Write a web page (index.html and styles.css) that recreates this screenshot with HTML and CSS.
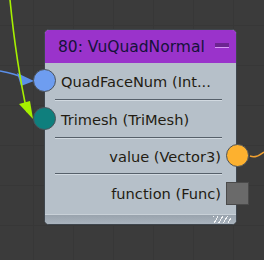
FILE: index.html
```html
<html>
<head>
<link rel="stylesheet" href="styles.css">
</head>
<body>
<div class="canvas">
    <svg class="wires" width="264" height="260" viewBox="0 0 264 260">
        <path d="M0 71 C 12 73, 20 76, 26 79" stroke="#5b8fe8" stroke-width="1.5" fill="none"/>
        <polygon points="34,81 17,73 21,86" fill="#5b8fe8"/>
        <path d="M10 0 C 14 40, 20 80, 27 112" stroke="#a6f000" stroke-width="1.6" fill="none"/>
        <polygon points="33,119 19,104 30,101" fill="#a6f000"/>
        <path d="M250 156 C 255 158, 258 156, 264 152" stroke="#f0a030" stroke-width="1.5" fill="none"/>
    </svg>

    <div class="node">
        <div class="node-head">
            <span class="node-title">80: VuQuadNormal</span>
            <span class="node-min"></span>
        </div>
        <div class="row row-in">
            <span class="port port-blue"></span>
            <span class="label">QuadFaceNum (Int...</span>
        </div>
        <div class="sep"></div>
        <div class="row row-in">
            <span class="port port-teal"></span>
            <span class="label">Trimesh (TriMesh)</span>
        </div>
        <div class="sep"></div>
        <div class="row row-out row-short">
            <span class="label">value (Vector3)</span>
            <span class="port port-orange"></span>
        </div>
        <div class="sep"></div>
        <div class="row row-out row-tall">
            <span class="label">function (Func)</span>
            <span class="port port-func"></span>
        </div>
        <div class="node-foot">
            <span class="grip"></span>
        </div>
    </div>
</div>
</body>
</html>
```

FILE: styles.css
```css
body {
    margin: 0;
    background-color: #3b3b3b;
    font-family: "DejaVu Sans", Verdana, sans-serif;
}

.canvas {
    position: relative;
    width: 264px;
    height: 260px;
    overflow: hidden;
    background-color: #3b3b3b;
    background-image:
        linear-gradient(to right, #373737 1px, transparent 1px),
        linear-gradient(to bottom, #373737 1px, transparent 1px);
    background-size: 40px 40px;
    background-position: 33px 25px;
}

.wires {
    position: absolute;
    left: 0;
    top: 0;
}

.node {
    position: absolute;
    left: 44px;
    top: 29px;
    width: 191px;
    height: 194px;
    border: 1px solid #3f464d;
    border-radius: 5px;
    background-color: #b6c0c9;
    display: flex;
    flex-direction: column;
}

.node-head {
    height: 33px;
    background-color: #9a33cb;
    border-radius: 4px 4px 0 0;
    display: flex;
    align-items: center;
    justify-content: space-between;
    padding: 0 7px 0 13px;
}

.node-title {
    font-size: 15.5px;
    color: #15123a;
}

.node-min {
    width: 14px;
    height: 4px;
    background-color: #6c2491;
    border-bottom: 1px solid #d79af5;
    margin-bottom: 3px;
}

.row {
    position: relative;
    height: 36px;
    display: flex;
    align-items: center;
    font-size: 14.6px;
    color: #231c12;
}

.row-short {
    height: 34px;
}

.row-tall {
    height: 37px;
}

.row-in {
    padding-left: 16px;
}

.row-out {
    justify-content: flex-end;
    padding-right: 15px;
}

.sep {
    height: 1px;
    margin: 0 14px 0 10px;
    background-color: #56606a;
    border-bottom: 1px solid #d2dae1;
}

.port {
    position: absolute;
    top: 50%;
    margin-top: -12px;
    width: 21px;
    height: 21px;
    border: 1px solid #4c535a;
    border-radius: 50%;
}

.row-in .port {
    left: -12px;
}

.row-out .port {
    right: -13px;
}

.port-blue {
    background-color: #6e9df0;
}

.port-teal {
    background-color: #0f7f7d;
}

.port-orange {
    background-color: #fdb12f;
}

.port-func {
    border-radius: 0;
    background-color: #6a6a6a;
    border-color: #4a4a4a;
}

.node-foot {
    margin-top: auto;
    height: 9px;
    border-top: 1px solid #c9d1d8;
    background: linear-gradient(to bottom, #99a3ad, #aab4be);
    border-radius: 0 0 4px 4px;
    position: relative;
}

.grip {
    position: absolute;
    right: 5px;
    top: 1px;
    width: 18px;
    height: 7px;
    background: repeating-linear-gradient(120deg, #f2f4f6 0 1px, transparent 1px 4px);
}
```
